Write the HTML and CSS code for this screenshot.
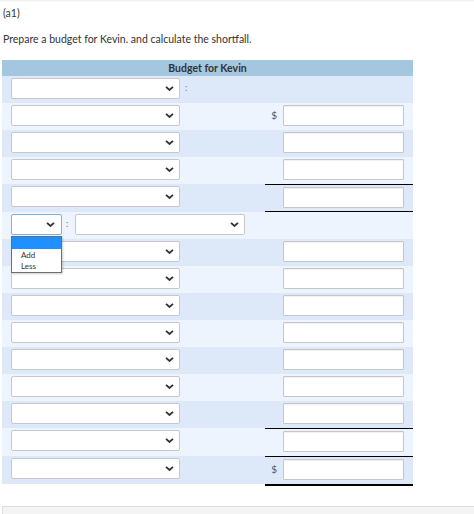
FILE: index.html
```html
<!DOCTYPE html>
<html>
<head>
<meta charset="utf-8">
<link rel="stylesheet" href="styles.css">
</head>
<body>
<div class="page">
  <div class="topshade"></div>
  <div class="part">(a1)</div>
  <div class="prompt">Prepare a budget for Kevin. and calculate the shortfall.</div>

  <div class="table">
    <div class="head">Budget for Kevin</div>

    <div class="row dark">
      <div class="lcell"><div class="sel"><svg class="chev" viewBox="0 0 9 5"><path d="M1 0.8 L4.5 4 L8 0.8"/></svg></div><span class="colon">:</span></div>
      <div class="rcell"></div>
    </div>
    <div class="row light">
      <div class="lcell"><div class="sel"><svg class="chev" viewBox="0 0 9 5"><path d="M1 0.8 L4.5 4 L8 0.8"/></svg></div></div>
      <div class="rcell"><span class="dollar">$</span><div class="inp"></div></div>
    </div>
    <div class="row dark">
      <div class="lcell"><div class="sel"><svg class="chev" viewBox="0 0 9 5"><path d="M1 0.8 L4.5 4 L8 0.8"/></svg></div></div>
      <div class="rcell"><div class="inp"></div></div>
    </div>
    <div class="row light">
      <div class="lcell"><div class="sel"><svg class="chev" viewBox="0 0 9 5"><path d="M1 0.8 L4.5 4 L8 0.8"/></svg></div></div>
      <div class="rcell"><div class="inp"></div></div>
    </div>
    <div class="row dark tall">
      <div class="lcell"><div class="sel"><svg class="chev" viewBox="0 0 9 5"><path d="M1 0.8 L4.5 4 L8 0.8"/></svg></div></div>
      <div class="rcell ruled-both"><div class="inp"></div></div>
    </div>
    <div class="row light">
      <div class="lcell"><div class="sel small focus"><svg class="chev" viewBox="0 0 9 5"><path d="M1 0.8 L4.5 4 L8 0.8"/></svg></div><span class="colon mid">:</span><div class="sel wide"><svg class="chev" viewBox="0 0 9 5"><path d="M1 0.8 L4.5 4 L8 0.8"/></svg></div></div>
      <div class="rcell"></div>
    </div>
    <div class="row dark">
      <div class="lcell"><div class="sel"><svg class="chev" viewBox="0 0 9 5"><path d="M1 0.8 L4.5 4 L8 0.8"/></svg></div></div>
      <div class="rcell"><div class="inp"></div></div>
    </div>
    <div class="row light">
      <div class="lcell"><div class="sel"><svg class="chev" viewBox="0 0 9 5"><path d="M1 0.8 L4.5 4 L8 0.8"/></svg></div></div>
      <div class="rcell"><div class="inp"></div></div>
    </div>
    <div class="row dark">
      <div class="lcell"><div class="sel"><svg class="chev" viewBox="0 0 9 5"><path d="M1 0.8 L4.5 4 L8 0.8"/></svg></div></div>
      <div class="rcell"><div class="inp"></div></div>
    </div>
    <div class="row light">
      <div class="lcell"><div class="sel"><svg class="chev" viewBox="0 0 9 5"><path d="M1 0.8 L4.5 4 L8 0.8"/></svg></div></div>
      <div class="rcell"><div class="inp"></div></div>
    </div>
    <div class="row dark">
      <div class="lcell"><div class="sel"><svg class="chev" viewBox="0 0 9 5"><path d="M1 0.8 L4.5 4 L8 0.8"/></svg></div></div>
      <div class="rcell"><div class="inp"></div></div>
    </div>
    <div class="row light">
      <div class="lcell"><div class="sel"><svg class="chev" viewBox="0 0 9 5"><path d="M1 0.8 L4.5 4 L8 0.8"/></svg></div></div>
      <div class="rcell"><div class="inp"></div></div>
    </div>
    <div class="row dark">
      <div class="lcell"><div class="sel"><svg class="chev" viewBox="0 0 9 5"><path d="M1 0.8 L4.5 4 L8 0.8"/></svg></div></div>
      <div class="rcell"><div class="inp"></div></div>
    </div>
    <div class="row light tall">
      <div class="lcell"><div class="sel"><svg class="chev" viewBox="0 0 9 5"><path d="M1 0.8 L4.5 4 L8 0.8"/></svg></div></div>
      <div class="rcell ruled-top"><div class="inp"></div></div>
    </div>
    <div class="row dark tall last">
      <div class="lcell"><div class="sel"><svg class="chev" viewBox="0 0 9 5"><path d="M1 0.8 L4.5 4 L8 0.8"/></svg></div></div>
      <div class="rcell ruled-total"><span class="dollar">$</span><div class="inp"></div></div>
    </div>
  </div>

  <div class="footer-box"></div>

  <div class="dropdown">
    <div class="opt hl"></div>
    <div class="opt">Add</div>
    <div class="opt">Less</div>
  </div>
</div>
</body>
</html>
```

FILE: styles.css
```css
html, body {
  margin: 0;
  padding: 0;
  background: #fff;
}
body {
  font-family: Lato, "Open Sans", Arial, sans-serif;
  font-size: 10.5px;
  color: #333;
  width: 474px;
  height: 514px;
  overflow: hidden;
}
.page {
  position: relative;
  width: 474px;
  height: 514px;
}
.topshade {
  height: 2px;
  background: linear-gradient(#ececec, #fff);
}
.part {
  margin: 5px 0 0 3px;
  line-height: 12px;
  height: 12px;
}
.prompt {
  margin: 14px 0 0 3px;
  line-height: 12px;
  height: 12px;
}
.table {
  margin: 15px 0 0 2px;
  width: 411px;
}
.head {
  height: 16px;
  line-height: 16px;
  background: #a5c6df;
  text-align: center;
  font-weight: bold;
  color: #333;
}
.row {
  display: flex;
  align-items: flex-start;
  height: 27px;
}
.row.tall { height: 28px; }
.row.last { height: 30px; }
.row.dark .lcell, .row.dark .rcell { background: #dde9f8; }
.row.light .lcell, .row.light .rcell { background: #edf4fd; }
.lcell {
  box-sizing: border-box;
  width: 263px;
  height: 100%;
  padding: 2px 0 0 9px;
  display: flex;
  align-items: flex-start;
}
.row.last .lcell { height: 28px; }
.rcell {
  box-sizing: border-box;
  width: 148px;
  height: 100%;
  padding: 2px 9px 0 0;
  display: flex;
  justify-content: flex-end;
  align-items: flex-start;
}
.ruled-both {
  border-top: 1px solid #000;
  border-bottom: 1px solid #000;
}
.ruled-top {
  border-top: 1px solid #000;
}
.ruled-total {
  border-top: 1px solid #000;
  border-bottom: 2px solid #000;
}
.sel {
  box-sizing: border-box;
  position: relative;
  width: 169px;
  height: 21px;
  background: #fff;
  border: 1px solid #c8c8c8;
  border-radius: 2px;
}
.sel.small { width: 51px; }
.sel.wide { width: 170px; }
.sel.focus { border-color: #7db2e4; }
.chev {
  position: absolute;
  right: 5px;
  top: 7px;
  width: 9px;
  height: 5px;
  fill: none;
  stroke: #333;
  stroke-width: 1.8;
}
.sel.small .chev { right: 6px; }
.colon {
  margin-left: 5px;
  line-height: 20px;
  color: #777;
  font-size: 9px;
}
.colon.mid { margin: 0 7px 0 4px; }
.dollar {
  margin-right: 6px;
  line-height: 21px;
  color: #555;
  font-size: 10px;
}
.inp {
  box-sizing: border-box;
  width: 121px;
  height: 21px;
  background: #fff;
  border: 1px solid #c6c6c6;
  border-radius: 1px;
  box-shadow: inset 0 1px 1px rgba(0,0,0,0.06);
}
.footer-box {
  position: absolute;
  left: 2px;
  top: 506px;
  right: 0;
  height: 20px;
  background: #f4f4f4;
  border-top: 1px solid #dedede;
  border-left: 1px solid #dedede;
}
.dropdown {
  position: absolute;
  left: 11px;
  top: 236px;
  width: 51px;
  height: 37px;
  box-sizing: border-box;
  background: #fff;
  border: 1px solid #6f6f6f;
  box-shadow: 1px 1px 2px rgba(0,0,0,0.2);
  font-size: 8px;
  color: #333;
}
.opt {
  height: 11px;
  line-height: 12px;
  padding-left: 9px;
}
.opt.hl {
  height: 12px;
  background: #1e90ff;
}
```
